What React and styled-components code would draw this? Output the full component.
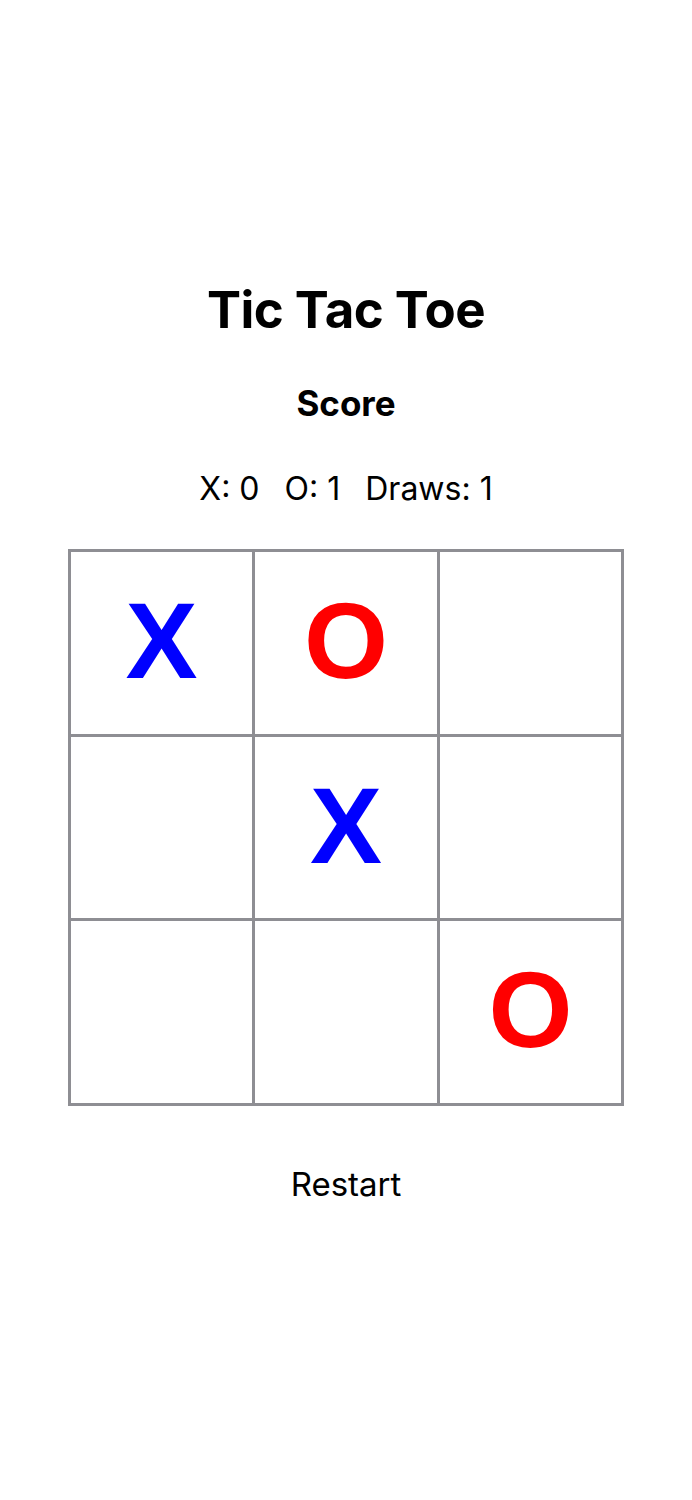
import React from "react";
import styled, { createGlobalStyle } from "styled-components";

const GlobalStyle = createGlobalStyle`
  body {
    margin: 0;
    background: #ffffff;
    font-family: Inter, "Noto Sans", sans-serif;
    color: #000000;
  }
`;

const Page = styled.div`
  display: flex;
  flex-direction: column;
  align-items: center;
  padding-top: 280px;
  min-height: 1500px;
  box-sizing: border-box;
`;

const Title = styled.h1`
  margin: 0;
  font-size: 51px;
  line-height: 60px;
  font-weight: 700;
  letter-spacing: -0.5px;
`;

const ScoreTitle = styled.h2`
  margin: 41px 0 0;
  font-size: 35px;
  line-height: 44px;
  font-weight: 700;
`;

const ScoreLine = styled.div`
  margin-top: 44px;
  display: flex;
  gap: 25px;
  font-size: 32px;
  line-height: 40px;
  font-weight: 400;
`;

const Board = styled.div`
  margin-top: 40px;
  display: grid;
  grid-template-columns: repeat(3, 181.5px);
  grid-template-rows: repeat(3, 181.5px);
  gap: 3px;
  padding: 3px;
  background: #8e8e93;
`;

const Cell = styled.div`
  background: #ffffff;
  display: flex;
  align-items: center;
  justify-content: center;
  padding-bottom: 4px;
  font-family: "Liberation Sans", Arial, sans-serif;
  font-size: 108px;
  font-weight: 700;
  color: ${(p) => (p.$mark === "X" ? "#0000ff" : "#ff0000")};
`;

const RestartButton = styled.button`
  margin-top: 58px;
  background: none;
  border: none;
  padding: 0;
  font-family: inherit;
  font-size: 33px;
  line-height: 40px;
  color: #000000;
  cursor: pointer;
`;

const board = ["X", "O", "", "", "X", "", "", "", "O"];

export default function App() {
  return (
    <>
      <GlobalStyle />
      <Page>
        <Title>Tic Tac Toe</Title>
        <ScoreTitle>Score</ScoreTitle>
        <ScoreLine>
          <span>X: 0</span>
          <span>O: 1</span>
          <span>Draws: 1</span>
        </ScoreLine>
        <Board>
          {board.map((mark, i) => (
            <Cell key={i} $mark={mark}>
              {mark}
            </Cell>
          ))}
        </Board>
        <RestartButton>Restart</RestartButton>
      </Page>
    </>
  );
}
